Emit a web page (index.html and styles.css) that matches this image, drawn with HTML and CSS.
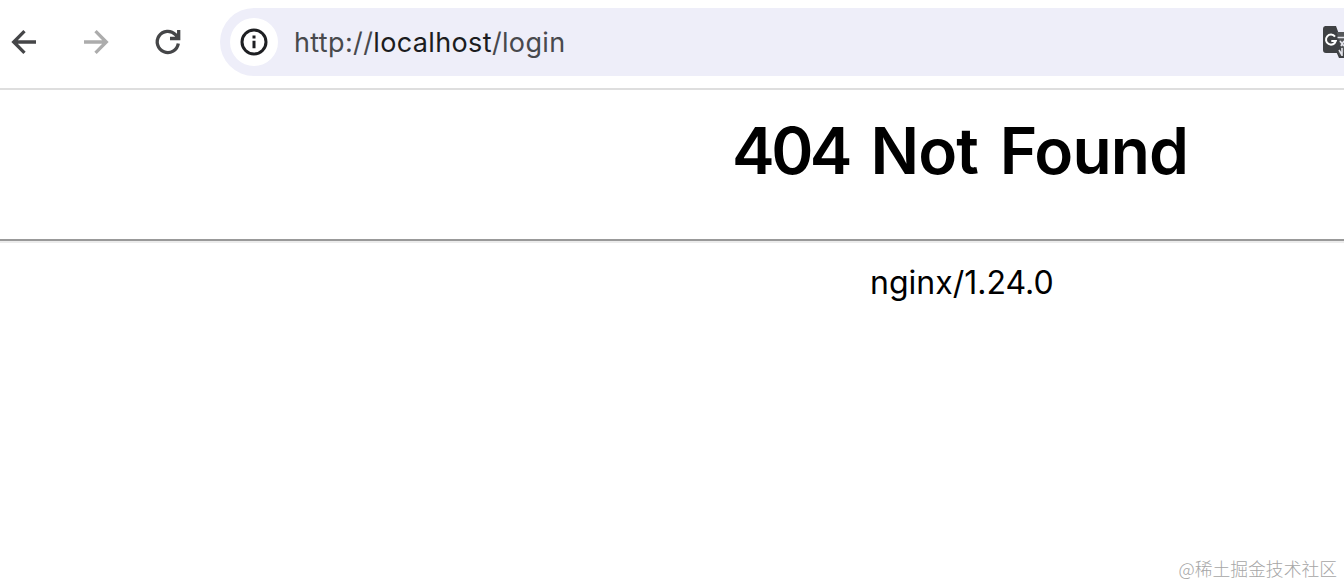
FILE: index.html
```html
<!DOCTYPE html>
<html lang="en">
<head>
<meta charset="utf-8">
<title>404 Not Found</title>
<link rel="stylesheet" href="styles.css">
</head>
<body>
<header class="toolbar">
  <nav class="nav">
    <svg class="icon" viewBox="0 0 28 28"><path d="M26 14H4M14.5 3.2 3.7 14l10.8 10.8"/></svg>
    <svg class="icon icon-disabled" viewBox="0 0 28 28"><path d="M2 14h22M13.5 3.2 24.3 14 13.5 24.8"/></svg>
    <svg class="icon" viewBox="0 0 28 28"><path d="M24.3 15.5A10.6 10.6 0 1 1 21.5 6.6L24.5 10M24.7 2v8.5H16"/></svg>
  </nav>
  <div class="address">
    <span class="info"><svg class="info-icon" viewBox="0 0 28 28"><circle cx="14" cy="14" r="12"/><path d="M14 12.8v7.5M14 7.5v3"/></svg></span>
    <span class="url">http://<span class="host">localhost</span>/login</span>
    <svg class="translate" viewBox="0 0 22 36"><path class="dark" d="M4 2h10l2.2 6H22v26h-5l-2.2-5H4q-3 0-3-3V5q0-3 3-3z"/><path class="light" d="M16.2 8H22v20l-4.2 4-1.8-4.5h3L13.6 8z"/><path class="dark" d="M3 2h10l7 26H3z"/><path class="letter" d="M13 12.6A5 5 0 1 0 13.8 17H9.3"/><path class="strokes" d="M15.5 13.5H22M18 17l4 5M22 17l-3 5M17 26l3 5M20 24v8"/></svg>
  </div>
</header>
<main class="page">
  <h1 class="title"><span class="code">404</span> <span class="word">Not</span> <span class="word">Found</span></h1>
  <hr class="rule">
  <p class="server">nginx/1.24.0</p>
</main>
<footer class="credit">@稀土掘金技术社区</footer>
</body>
</html>
```
FILE: styles.css
```css
* { box-sizing: border-box; }
body {
  margin: 0;
  width: 1344px;
  height: 586px;
  overflow: hidden;
  display: flex;
  flex-direction: column;
  background: #fff;
  font-family: Inter, "Noto Sans CJK SC", sans-serif;
}
.toolbar {
  flex: none;
  display: flex;
  height: 90px;
  padding-top: 8px;
  border-bottom: 2px solid #dedede;
}
.nav {
  flex: none;
  display: flex;
  align-items: center;
  gap: 44px;
  width: 220px;
  height: 68px;
  padding-left: 10px;
}
.icon {
  flex: none;
  width: 28px;
  height: 28px;
  fill: none;
  stroke: #454648;
  stroke-width: 3.3;
}
.icon-disabled { stroke: #acacac; }
.address {
  flex: 1;
  display: flex;
  align-items: center;
  height: 68px;
  padding-left: 10px;
  background: #eeeef9;
  border-radius: 34px 0 0 34px;
}
.info {
  flex: none;
  display: flex;
  align-items: center;
  justify-content: center;
  width: 48px;
  height: 48px;
  border-radius: 50%;
  background: #fff;
}
.info-icon {
  width: 28px;
  height: 28px;
  fill: none;
  stroke: #1e1f22;
  stroke-width: 3;
}
.url {
  margin-left: 16px;
  padding-top: 1px;
  color: #48494d;
  font-size: 27px;
  letter-spacing: 0.36px;
  line-height: 34px;
  white-space: nowrap;
}
.host { color: #1b1c20; }
.translate {
  flex: none;
  width: 22px;
  height: 36px;
  margin-left: auto;
}
.dark { fill: #3f4144; }
.light { fill: #55575a; }
.letter { fill: none; stroke: #fff; stroke-width: 2; }
.strokes { fill: none; stroke: #e4e4ec; stroke-width: 1.6; }
.page {
  flex: 1;
  color: #000;
}
.title {
  margin: 22px 0 0;
  padding-left: 732px;
  font-size: 64px;
  font-weight: 600;
  line-height: 78px;
  word-spacing: 5.5px;
  white-space: nowrap;
}
.code { letter-spacing: -3.5px; }
.word { letter-spacing: -0.9px; }
.rule {
  height: 4px;
  margin: 49px 0 0;
  border: 0;
  border-top: 2px solid #999;
  border-bottom: 2px solid #ececec;
}
.server {
  margin: 20px 0 0;
  padding-left: 870px;
  font-size: 32px;
  line-height: 40px;
}
.credit {
  align-self: flex-end;
  padding: 0 7px 6px 0;
  color: #a6a6a6;
  font-family: "Noto Sans CJK SC", sans-serif;
  font-size: 17.8px;
  font-weight: 300;
  line-height: 24px;
}
```
